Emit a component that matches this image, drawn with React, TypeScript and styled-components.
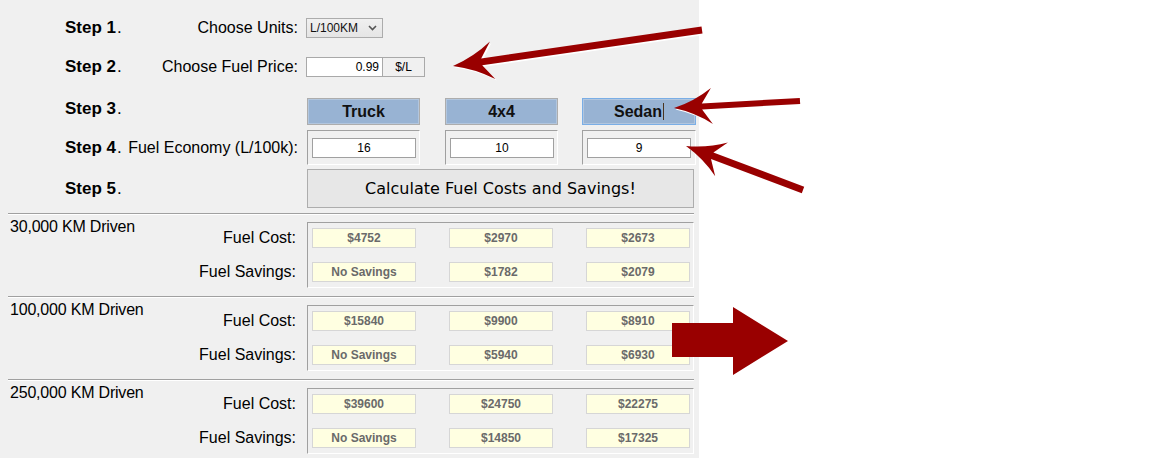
import React from 'react'
import styled, { createGlobalStyle } from 'styled-components'

const GlobalStyle = createGlobalStyle`
  html, body { margin: 0; padding: 0; background: #fff; }
  body { font-family: "Liberation Sans", Arial, sans-serif; color: #000; }
  * { box-sizing: border-box; }
`

const Page = styled.div`
  position: relative;
  width: 1157px;
  height: 458px;
  overflow: hidden;
  background: #fff;
`

const Panel = styled.div`
  width: 699px;
  height: 458px;
  background: #f0f0f0;
  padding: 18px 0 0 8px;
  display: flex;
  flex-direction: column;
`

const StepRow = styled.div<{ $h: number; $gap: number }>`
  display: grid;
  grid-template-columns: 233px 1fr;
  column-gap: 8px;
  align-items: center;
  height: ${p => p.$h}px;
  margin: ${p => p.$gap}px 0 0 57px;
`

const StepHead = styled.div<{ $raise?: number }>`
  display: flex;
  justify-content: space-between;
  align-items: center;
  font-size: 16px;
  margin-bottom: ${p => p.$raise ?? 0}px;
`

const StepNum = styled.span`
  font-size: 17px;
  font-weight: bold;
  & > i { font-style: normal; font-weight: normal; margin-left: 1px; }
`

const FieldLabel = styled.span`
  text-align: right;
  white-space: nowrap;
`

const UnitSelect = styled.div`
  width: 77px;
  height: 20px;
  border: 1px solid #acacac;
  background: linear-gradient(#f0f0f0, #e5e5e5);
  display: flex;
  align-items: center;
  justify-content: space-between;
  padding: 0 5px 0 3px;
  font-size: 12px;
  color: #111;
`

const PriceGroup = styled.div`
  display: flex;
  height: 20px;
  font-size: 12px;
`

const PriceBox = styled.div`
  width: 77px;
  border: 1px solid #a9a9a9;
  background: #fff;
  text-align: right;
  padding: 0 3px;
  line-height: 18px;
`

const UnitTag = styled.div`
  width: 42px;
  border: 1px solid #a9a9a9;
  border-left: none;
  text-align: center;
  line-height: 18px;
`

const VehicleGrid = styled.div`
  display: grid;
  grid-template-columns: 113px 113px 113px;
  column-gap: 25px;
  margin-left: 1px;
  height: 100%;
  & > :last-child { margin-left: -1px; }
`

const VehicleButton = styled.div<{ $focused?: boolean }>`
  border: 1px solid ${p => (p.$focused ? '#7aaee6' : '#adadad')};
  background: #98b3d3;
  box-shadow: inset 0 0 0 1px rgba(255, 255, 255, 0.25);
  font-size: 16px;
  font-weight: bold;
  color: #111;
  display: flex;
  align-items: center;
  justify-content: center;
`

const Caret = styled.span`
  display: inline-block;
  width: 1px;
  height: 17px;
  background: #4a3520;
  margin-left: 1px;
`

const EconomyBox = styled.div`
  border-top: 1px solid #a0a0a0;
  border-left: 1px solid #a0a0a0;
  border-right: 1px solid #fff;
  border-bottom: 1px solid #fff;
  padding: 7px 2px 0 4px;
`

const EconomyInput = styled.div`
  width: 104px;
  height: 20px;
  border: 1px solid #a0a0a0;
  background: #fff;
  font-size: 12px;
  line-height: 18px;
  text-align: center;
`

const CalcButton = styled.div`
  width: 387px;
  height: 100%;
  margin-left: 1px;
  border: 1px solid #adadad;
  background: #e7e7e7;
  font-family: "DejaVu Sans", Verdana, sans-serif;
  font-size: 16px;
  display: flex;
  align-items: center;
  justify-content: center;
`

const Separator = styled.div<{ $gap: number }>`
  width: 686px;
  height: 2px;
  border-top: 1px solid #a0a0a0;
  border-bottom: 1px solid #fff;
  margin-top: ${p => p.$gap}px;
`

const SectionBody = styled.div`
  display: grid;
  grid-template-columns: 290px 387px;
  column-gap: 9px;
  height: 66px;
  margin-top: 7px;
`

const SectionLeft = styled.div`
  display: flex;
  justify-content: space-between;
  align-items: flex-start;
  padding: 0 2px;
  font-size: 16px;
`

const SectionName = styled.div`
  line-height: 18px;
  margin-top: -4px;
  letter-spacing: -0.2px;
`

const RowLabels = styled.div`
  display: flex;
  flex-direction: column;
  align-items: flex-end;
  gap: 14px;
  padding-top: 6px;
  & > span { line-height: 20px; }
`

const ResultBox = styled.div`
  border-top: 1px solid #a0a0a0;
  border-left: 1px solid #a0a0a0;
  border-right: 1px solid #fff;
  border-bottom: 1px solid #fff;
  padding: 5px 3px 5px 4px;
  display: grid;
  grid-template-columns: repeat(3, 104px);
  grid-auto-rows: 20px;
  column-gap: 33px;
  row-gap: 14px;
`

const ResultCell = styled.div`
  border: 1px solid #d6d6d6;
  background: #ffffe1;
  color: #6a6a6a;
  font-size: 12px;
  font-weight: bold;
  line-height: 18px;
  text-align: center;
`

const Overlay = styled.svg`
  position: absolute;
  left: 0;
  top: 0;
  pointer-events: none;
`

type Pt = [number, number]

const arrowPath = (tail: Pt, tip: Pt, shaft: number, headL: number, headW: number, notch: number) => {
  const dx = tip[0] - tail[0]
  const dy = tip[1] - tail[1]
  const len = Math.hypot(dx, dy)
  const ux = dx / len
  const uy = dy / len
  const nx = -uy
  const ny = ux
  const at = (back: number, side: number) =>
    `${(tip[0] - ux * back + nx * side).toFixed(1)},${(tip[1] - uy * back + ny * side).toFixed(1)}`
  const tl = (side: number) => `${(tail[0] + nx * side).toFixed(1)},${(tail[1] + ny * side).toFixed(1)}`
  const s = shaft / 2
  return `M${tip[0]},${tip[1]} Q${at(headL * 0.55, headW * 0.32)} ${at(headL, headW)} L${at(headL - notch, s)} L${tl(s)} L${tl(-s)} L${at(headL - notch, -s)} L${at(headL, -headW)} Q${at(headL * 0.55, -headW * 0.32)} ${tip[0]},${tip[1]} Z`
}

const arrows = [
  arrowPath([702, 30], [453, 66], 7, 40, 19, 11),
  arrowPath([800, 101], [674, 108], 6, 38, 18, 10),
  arrowPath([803, 190], [686, 146], 7, 38, 18, 10),
]

const sections = [
  { name: '30,000 KM Driven', cost: ['$4752', '$2970', '$2673'], save: ['No Savings', '$1782', '$2079'] },
  { name: '100,000 KM Driven', cost: ['$15840', '$9900', '$8910'], save: ['No Savings', '$5940', '$6930'] },
  { name: '250,000 KM Driven', cost: ['$39600', '$24750', '$22275'], save: ['No Savings', '$14850', '$17325'] },
]

const Chevron = () => (
  <svg width="9" height="6" viewBox="0 0 9 6">
    <path d="M1 1 L4.5 4.5 L8 1" fill="none" stroke="#555" strokeWidth="1.6" />
  </svg>
)

export default function App() {
  return (
    <Page>
      <GlobalStyle />
      <Panel>
        <StepRow $h={20} $gap={0}>
          <StepHead>
            <StepNum>Step 1<i>.</i></StepNum>
            <FieldLabel>Choose Units:</FieldLabel>
          </StepHead>
          <UnitSelect>
            <span>L/100KM</span>
            <Chevron />
          </UnitSelect>
        </StepRow>

        <StepRow $h={20} $gap={19}>
          <StepHead>
            <StepNum>Step 2<i>.</i></StepNum>
            <FieldLabel>Choose Fuel Price:</FieldLabel>
          </StepHead>
          <PriceGroup>
            <PriceBox>0.99</PriceBox>
            <UnitTag>$/L</UnitTag>
          </PriceGroup>
        </StepRow>

        <StepRow $h={27} $gap={21}>
          <StepHead $raise={6}>
            <StepNum>Step 3<i>.</i></StepNum>
          </StepHead>
          <VehicleGrid>
            <VehicleButton>Truck</VehicleButton>
            <VehicleButton>4x4</VehicleButton>
            <VehicleButton $focused>
              Sedan<Caret />
            </VehicleButton>
          </VehicleGrid>
        </StepRow>

        <StepRow $h={35} $gap={5}>
          <StepHead>
            <StepNum>Step 4<i>.</i></StepNum>
            <FieldLabel>Fuel Economy (L/100k):</FieldLabel>
          </StepHead>
          <VehicleGrid>
            {['16', '10', '9'].map(v => (
              <EconomyBox key={v}>
                <EconomyInput>{v}</EconomyInput>
              </EconomyBox>
            ))}
          </VehicleGrid>
        </StepRow>

        <StepRow $h={39} $gap={4}>
          <StepHead>
            <StepNum>Step 5<i>.</i></StepNum>
          </StepHead>
          <CalcButton>Calculate Fuel Costs and Savings!</CalcButton>
        </StepRow>

        {sections.map((s, i) => (
          <React.Fragment key={s.name}>
            <Separator $gap={i === 0 ? 5 : 8} />
            <SectionBody>
              <SectionLeft>
                <SectionName>{s.name}</SectionName>
                <RowLabels>
                  <span>Fuel Cost:</span>
                  <span>Fuel Savings:</span>
                </RowLabels>
              </SectionLeft>
              <ResultBox>
                {s.cost.map((c, j) => (
                  <ResultCell key={'c' + j}>{c}</ResultCell>
                ))}
                {s.save.map((c, j) => (
                  <ResultCell key={'s' + j}>{c}</ResultCell>
                ))}
              </ResultBox>
            </SectionBody>
          </React.Fragment>
        ))}
      </Panel>

      <Overlay width="1157" height="458" viewBox="0 0 1157 458">
        {arrows.map((d, i) => (
          <g key={i}>
            <path d={d} fill="#fff" transform="translate(1.5 1.5)" />
            <path d={d} fill="#990000" />
          </g>
        ))}
        <polygon points="672,323 733,323 733,307 788,341 733,375 733,357 672,357" fill="#990000" />
      </Overlay>
    </Page>
  )
}
